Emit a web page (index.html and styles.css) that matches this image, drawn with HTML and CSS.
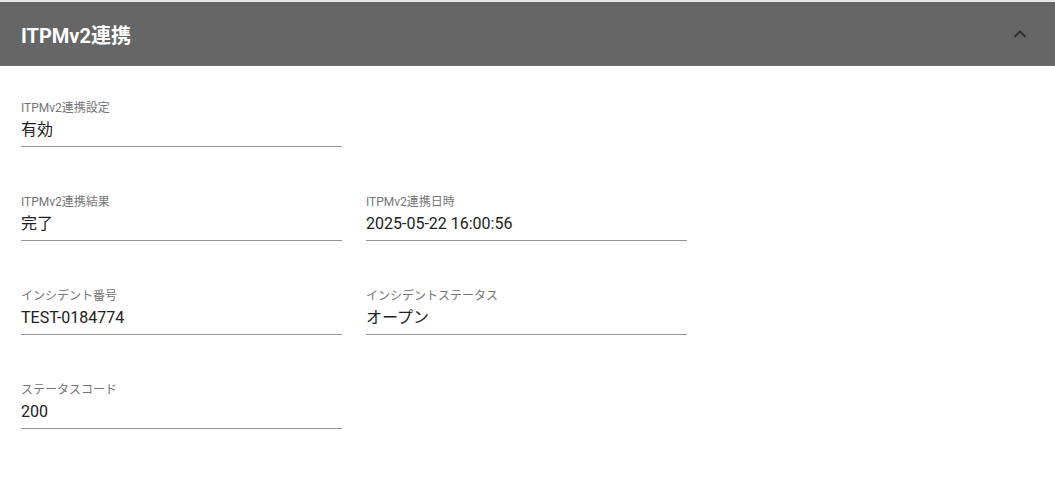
FILE: index.html
```html
<!DOCTYPE html>
<html lang="ja">
<head>
	<meta charset="utf-8">
	<meta name="viewport" content="width=device-width, initial-scale=1">
	<title>ITPMv2連携</title>
	<link rel="stylesheet" href="styles.css">
</head>
<body>
	<div class="panel">
		<div class="panel-header">
			<span class="panel-title">ITPMv2連携</span>
			<svg class="chevron" width="24" height="24" viewBox="0 0 24 24"><path d="M7.41 15.41 12 10.83l4.59 4.58L18 14l-6-6-6 6z"/></svg>
		</div>
		<div class="panel-body">
			<div class="field">
				<div class="field-label">ITPMv2連携設定</div>
				<div class="field-value">有効</div>
			</div>
			<div></div>
			<div class="field">
				<div class="field-label">ITPMv2連携結果</div>
				<div class="field-value">完了</div>
			</div>
			<div class="field">
				<div class="field-label">ITPMv2連携日時</div>
				<div class="field-value">2025-05-22 16:00:56</div>
			</div>
			<div class="field">
				<div class="field-label">インシデント番号</div>
				<div class="field-value">TEST-0184774</div>
			</div>
			<div class="field">
				<div class="field-label">インシデントステータス</div>
				<div class="field-value">オープン</div>
			</div>
			<div class="field">
				<div class="field-label">ステータスコード</div>
				<div class="field-value">200</div>
			</div>
		</div>
	</div>
</body>
</html>
```

FILE: styles.css
```css
body{
	margin: 0;
	font-family: Roboto, "Noto Sans CJK JP", sans-serif;
	background-color: #fff;
	border-top: 2px solid #e6e6e6;
}
.panel-header{
	height: 64px;
	background-color: #666666;
	display: flex;
	align-items: center;
	justify-content: space-between;
	padding: 0 23px 0 21px;
}
.panel-title{
	color: #fff;
	font-size: 20px;
	font-weight: 700;
}
.chevron{
	fill: #2e2e2e;
}
.panel-body{
	display: grid;
	grid-template-columns: 321px 321px;
	column-gap: 24px;
	row-gap: 47px;
	padding: 34px 21px 40px;
}
.field{
	border-bottom: 1px solid #949494;
	padding-bottom: 4px;
}
.field-label{
	font-size: 12px;
	line-height: 16px;
	color: #757575;
	margin-bottom: 2px;
}
.field-value{
	font-size: 16px;
	line-height: 24px;
	color: #212121;
}
```
